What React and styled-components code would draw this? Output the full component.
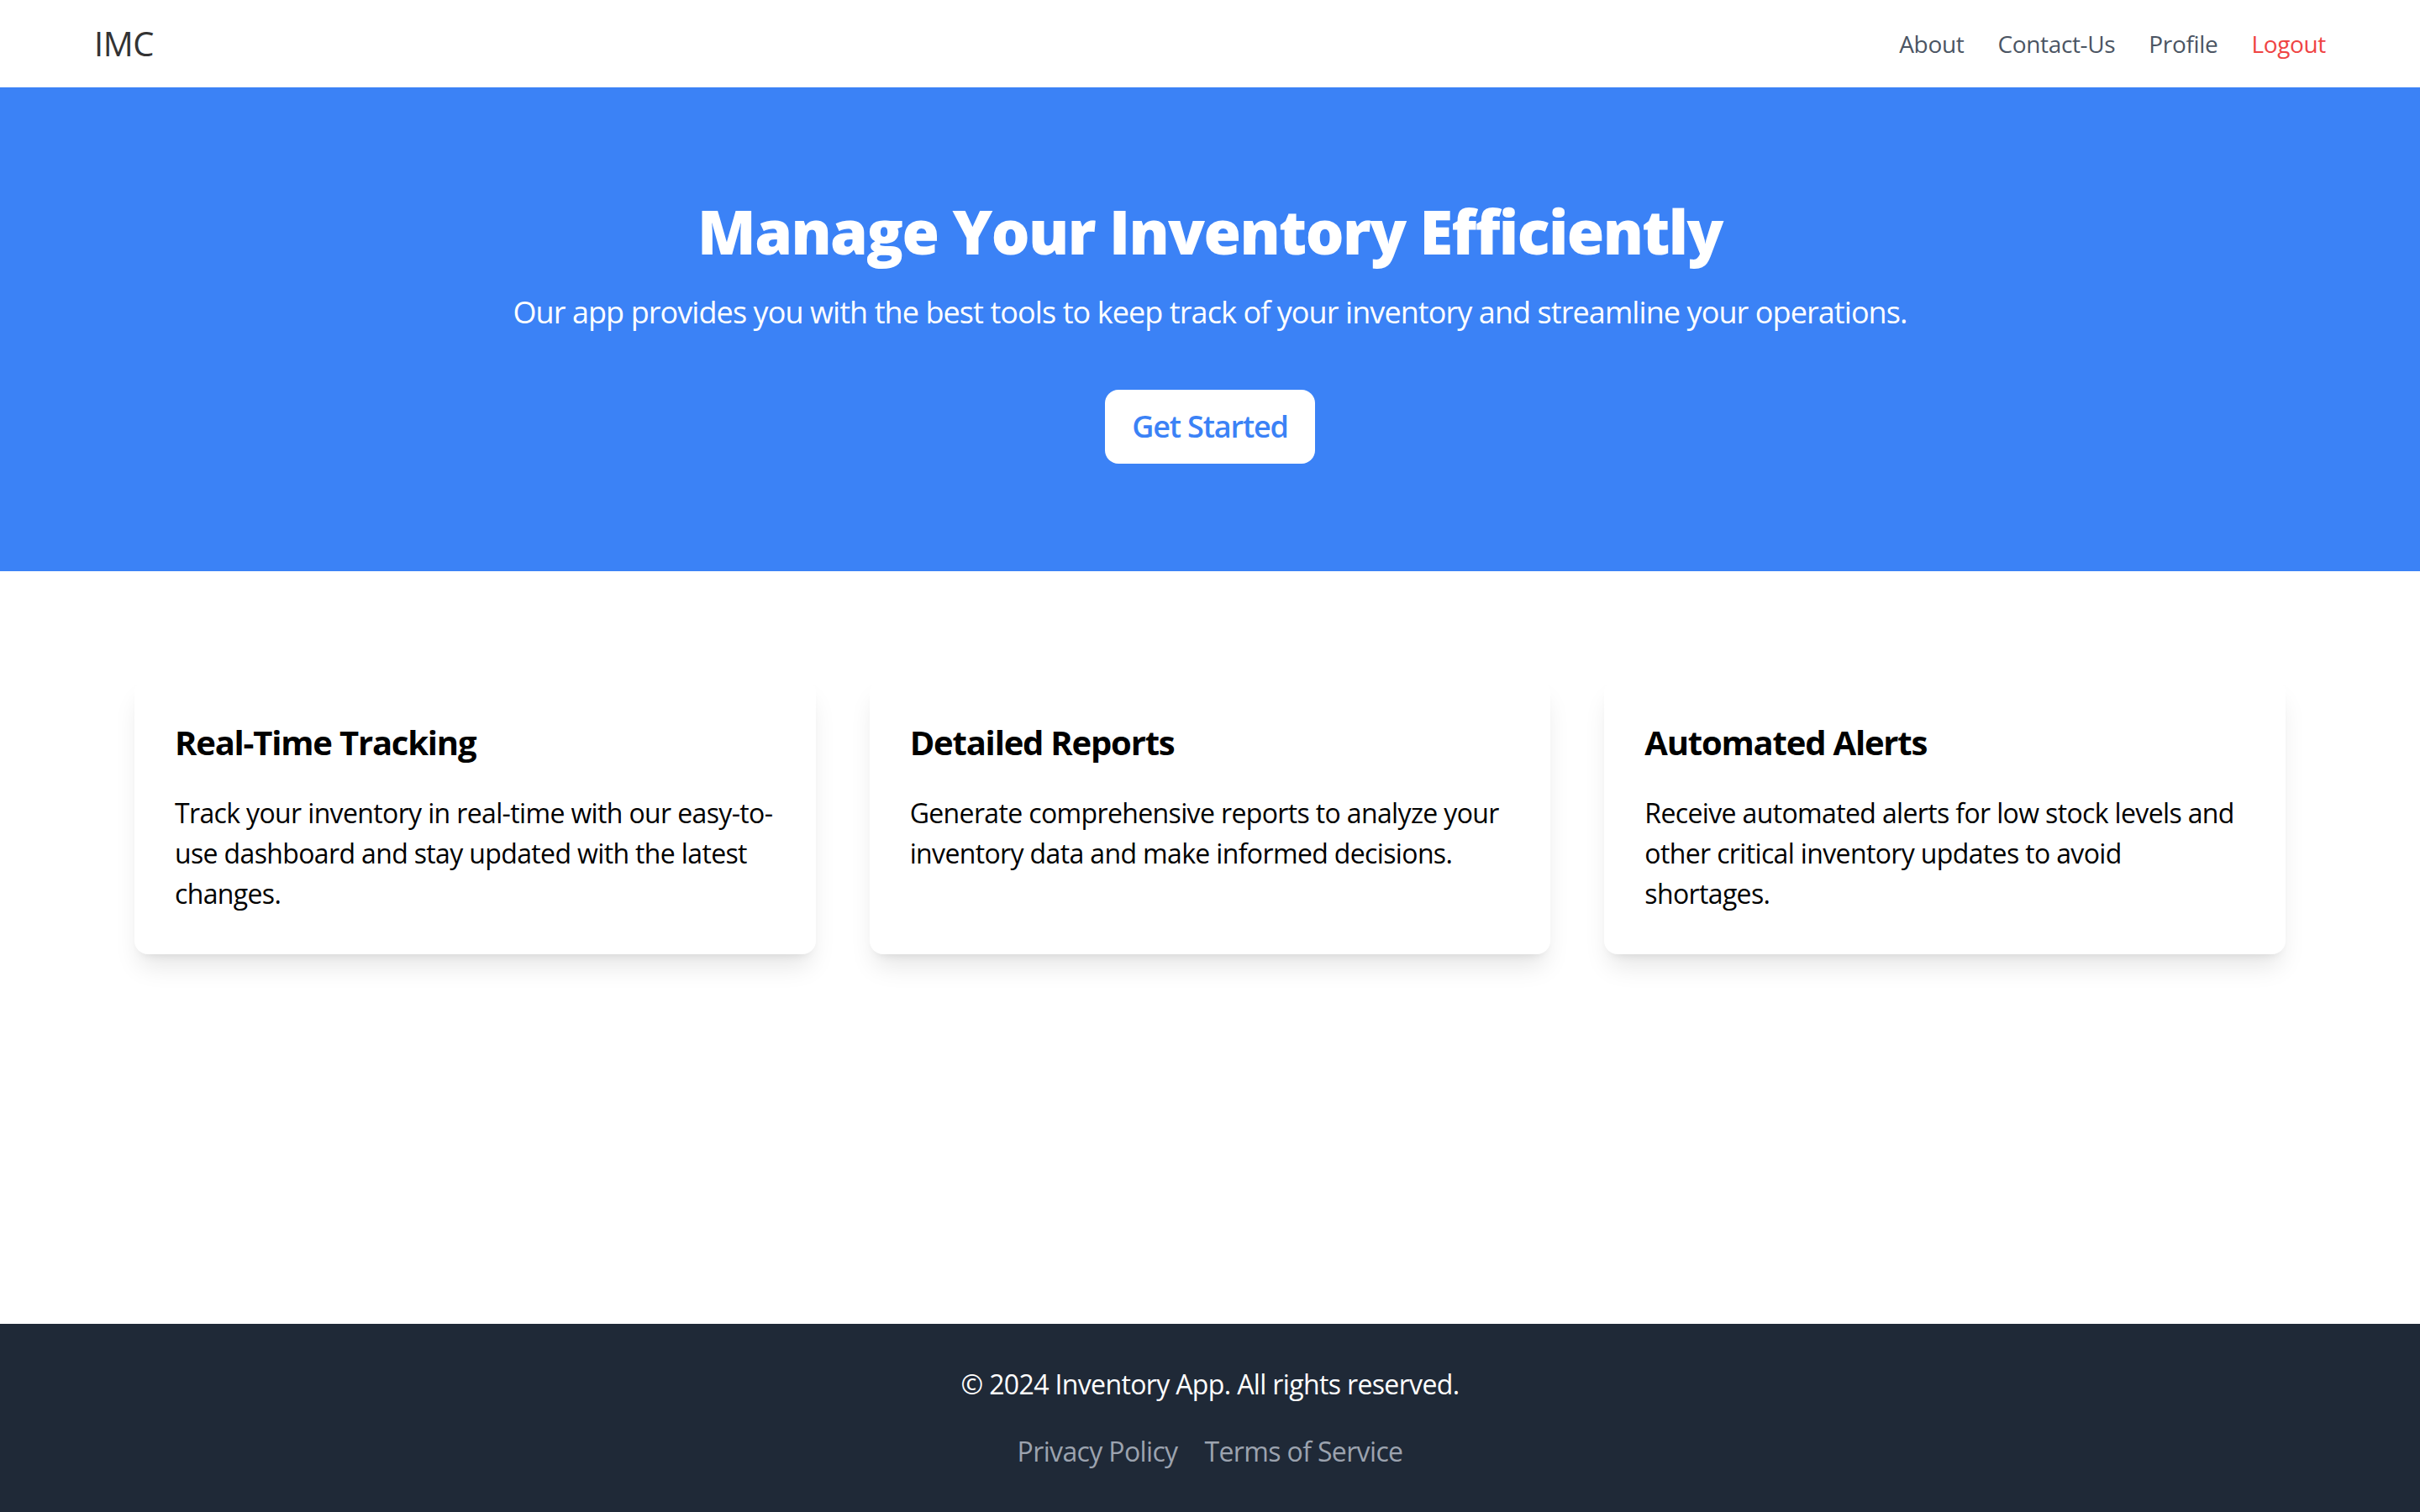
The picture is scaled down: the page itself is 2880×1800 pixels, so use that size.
import React from "react";
import styled, { createGlobalStyle } from "styled-components";

const GlobalStyle = createGlobalStyle`
  * {
    box-sizing: border-box;
  }

  body {
    margin: 0;
    font-family: "Open Sans", "Noto Sans", sans-serif;
    letter-spacing: -0.64px;
    color: #000000;
    background: #ffffff;
  }

  h1, h2, h3, p {
    margin: 0;
  }
`;

const Page = styled.div`
  display: flex;
  flex-direction: column;
  min-height: 100vh;
`;

const Header = styled.header`
  display: flex;
  align-items: center;
  justify-content: space-between;
  padding: 24px 112px;
  background: #ffffff;
`;

const Logo = styled.a`
  font-size: 40px;
  line-height: 56px;
  letter-spacing: -0.4px;
  color: #333333;
  text-decoration: none;
`;

const Nav = styled.nav`
  display: flex;
  align-items: center;
  gap: 40px;
`;

const NavLink = styled.a`
  font-size: 28px;
  line-height: 40px;
  font-weight: 500;
  letter-spacing: -0.34px;
  color: ${(p) => (p.$danger ? "#ef4444" : "#4b5563")};
  text-decoration: none;
`;

const Hero = styled.section`
  display: flex;
  flex-direction: column;
  align-items: center;
  padding: 128px 0;
  background: #3b82f6;
  color: #ffffff;
  text-align: center;
`;

const Title = styled.h1`
  font-size: 72px;
  line-height: 80px;
  font-weight: 800;
  letter-spacing: -1.58px;
  margin-bottom: 32px;
  transform: translateY(3px);
`;

const Lead = styled.p`
  font-size: 36px;
  line-height: 56px;
  letter-spacing: -0.92px;
  margin-bottom: 64px;
`;

const StartButton = styled.a`
  display: inline-block;
  padding: 16px 32px;
  border-radius: 16px;
  background: #ffffff;
  color: #3b82f6;
  font-size: 36px;
  line-height: 56px;
  font-weight: 600;
  letter-spacing: -1.15px;
  text-decoration: none;
`;

const Main = styled.main`
  flex: 1;
  padding: 128px 0;
`;

const CardGrid = styled.div`
  display: grid;
  grid-template-columns: repeat(3, 1fr);
  gap: 64px;
  max-width: 2560px;
  margin: 0 auto;
`;

const Card = styled.div`
  padding: 48px;
  border-radius: 16px;
  background: #ffffff;
  box-shadow: 0 20px 30px -6px rgba(0, 0, 0, 0.1), 0 8px 12px -8px rgba(0, 0, 0, 0.1);
`;

const CardTitle = styled.h3`
  font-size: 40px;
  line-height: 56px;
  font-weight: 700;
  letter-spacing: -1.2px;
  margin-bottom: 32px;
`;

const CardText = styled.p`
  font-size: 32px;
  line-height: 48px;
`;

const Footer = styled.footer`
  padding: 48px 0;
  background: #1f2937;
  color: #ffffff;
  text-align: center;
`;

const Copy = styled.p`
  font-size: 32px;
  line-height: 48px;
`;

const FooterLinks = styled.div`
  display: flex;
  justify-content: center;
  gap: 32px;
  margin-top: 32px;
`;

const FooterLink = styled.a`
  font-size: 32px;
  line-height: 48px;
  color: #9ca3af;
  text-decoration: none;
`;

const features = [
  {
    title: "Real-Time Tracking",
    text: "Track your inventory in real-time with our easy-to-use dashboard and stay updated with the latest changes.",
  },
  {
    title: "Detailed Reports",
    text: "Generate comprehensive reports to analyze your inventory data and make informed decisions.",
  },
  {
    title: "Automated Alerts",
    text: "Receive automated alerts for low stock levels and other critical inventory updates to avoid shortages.",
  },
];

const App = () => {
  return (
    <Page>
      <GlobalStyle />
      <Header>
        <Logo href="#home">IMC</Logo>
        <Nav>
          <NavLink href="#about">About</NavLink>
          <NavLink href="#contact">Contact-Us</NavLink>
          <NavLink href="#profile">Profile</NavLink>
          <NavLink href="#logout" $danger>
            Logout
          </NavLink>
        </Nav>
      </Header>

      <Hero>
        <Title>Manage Your Inventory Efficiently</Title>
        <Lead>
          Our app provides you with the best tools to keep track of your inventory and streamline your
          operations.
        </Lead>
        <StartButton href="#start">Get Started</StartButton>
      </Hero>

      <Main>
        <CardGrid>
          {features.map((f) => (
            <Card key={f.title}>
              <CardTitle>{f.title}</CardTitle>
              <CardText>{f.text}</CardText>
            </Card>
          ))}
        </CardGrid>
      </Main>

      <Footer>
        <Copy>© 2024 Inventory App. All rights reserved.</Copy>
        <FooterLinks>
          <FooterLink href="#privacy">Privacy Policy</FooterLink>
          <FooterLink href="#terms">Terms of Service</FooterLink>
        </FooterLinks>
      </Footer>
    </Page>
  );
};

export default App;
